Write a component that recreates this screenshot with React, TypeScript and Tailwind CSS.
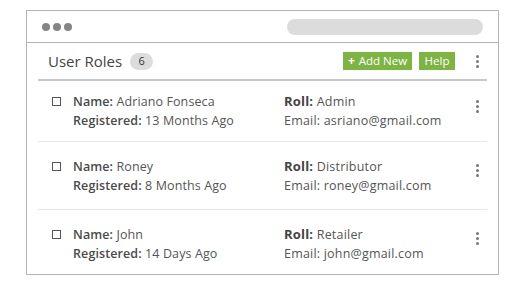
import React from 'react';

interface Role {
  name: string;
  registered: string;
  roll: string;
  email: string;
}

const roles: Role[] = [
  { name: 'Adriano Fonseca', registered: '13 Months Ago', roll: 'Admin', email: 'asriano@gmail.com' },
  { name: 'Roney', registered: '8 Months Ago', roll: 'Distributor', email: 'roney@gmail.com' },
  { name: 'John', registered: '14 Days Ago', roll: 'Retailer', email: 'john@gmail.com' },
];

const Kebab = () => (
  <div className="flex flex-col items-center gap-[2px] w-[4px]">
    <span className="block w-[3px] h-[3px] rounded-full bg-[#777]" />
    <span className="block w-[3px] h-[3px] rounded-full bg-[#777]" />
    <span className="block w-[3px] h-[3px] rounded-full bg-[#777]" />
  </div>
);

const rowClasses = ['h-[61px]', 'h-[68px]', 'h-[63px] pt-[4px]'];

export default function App() {
  return (
    <div
      className="w-[525px] h-[293px] bg-white pt-[10px] pl-[26px]"
      style={{ fontFamily: '"Open Sans", "Liberation Sans", sans-serif' }}
    >
      <div className="w-[473px] h-[265px] border border-[#b3b6b9] flex flex-col">
        {/* title bar */}
        <div className="h-[32px] border-b border-[#b3b6b9] flex items-center justify-between pl-[15px] pr-[15px]">
          <div className="flex gap-[3px]">
            <span className="block w-[8px] h-[8px] rounded-full bg-[#858585]" />
            <span className="block w-[8px] h-[8px] rounded-full bg-[#858585]" />
            <span className="block w-[8px] h-[8px] rounded-full bg-[#858585]" />
          </div>
          <div className="w-[196px] h-[16px] rounded-full bg-[#dcdcdc]" />
        </div>

        <div className="mx-[11px] flex flex-col">
          {/* header */}
          <div className="h-[38px] flex items-center border-b-2 border-[#c6c9cc] pl-[10px] pr-[8px]">
            <span className="text-[15px] text-[#444]">User Roles</span>
            <span className="ml-[8px] w-[23px] h-[17px] rounded-full bg-[#dcdcdc] text-[11px] text-[#333] flex items-center justify-center">
              6
            </span>
            <div className="ml-auto flex items-center">
              <button className="h-[18px] w-[69px] bg-[#7db443] text-white text-[11.5px] flex items-center justify-center gap-[4px]">
                <span className="font-bold text-[12px] leading-none">+</span>
                <span>Add New</span>
              </button>
              <button className="ml-[7px] h-[18px] w-[36px] bg-[#7db443] text-white text-[11.5px] flex items-center justify-center">
                Help
              </button>
              <div className="ml-[20px]">
                <Kebab />
              </div>
            </div>
          </div>

          {/* rows */}
          {roles.map((r, i) => (
            <div
              key={r.name}
              className={`${rowClasses[i]} flex items-center ${i < roles.length - 1 ? 'border-b border-[#e6e6e6]' : ''} pl-[14px] pr-[8px]`}
            >
              <div className="w-[9px] h-[9px] border border-[#555] self-center mb-[19px]" />
              <div className="ml-[12px] w-[211px] flex flex-col gap-[4px] text-[12.5px] tracking-[0.1px] leading-[15px] text-[#555]">
                <div>
                  <span className="font-semibold text-[#4a4a4a]">Name:</span> {r.name}
                </div>
                <div>
                  <span className="font-semibold text-[#4a4a4a]">Registered:</span> {r.registered}
                </div>
              </div>
              <div className="flex flex-col gap-[4px] text-[12.5px] tracking-[0.2px] leading-[15px] text-[#555]">
                <div>
                  <span className="font-bold text-[13px] text-[#444]">Roll:</span> {r.roll}
                </div>
                <div>Email: {r.email}</div>
              </div>
              <div className="ml-auto self-center mb-[10px]">
                <Kebab />
              </div>
            </div>
          ))}
        </div>
      </div>
    </div>
  );
}
